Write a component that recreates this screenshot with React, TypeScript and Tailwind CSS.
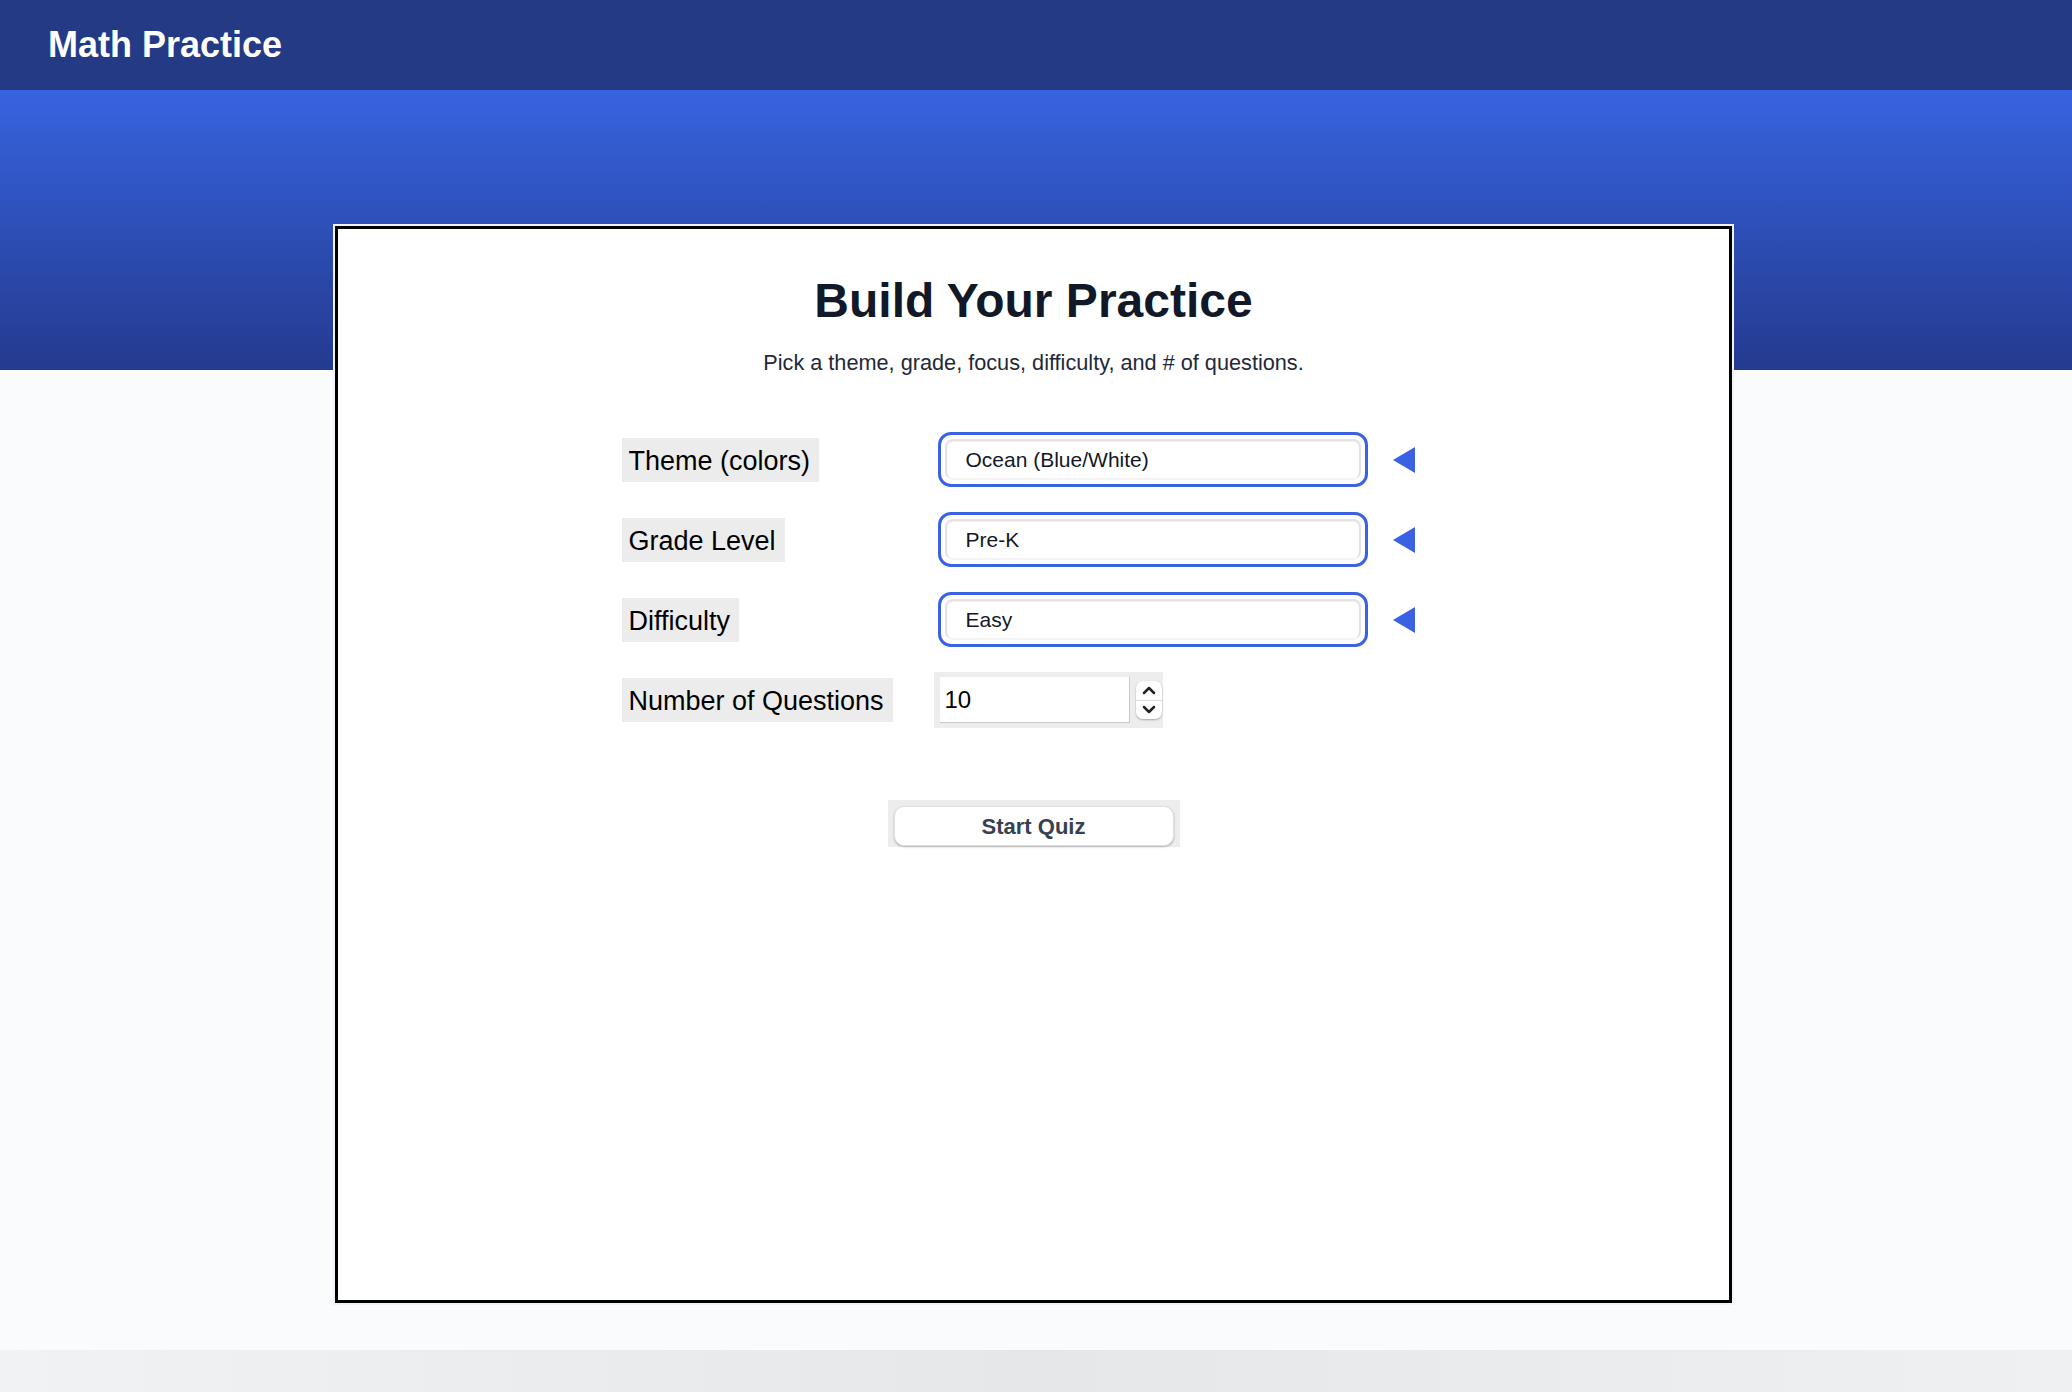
import { useState } from "react";

type SelectProps = {
  value: string;
};

function FakeSelect(props: SelectProps) {
  return (
    <div className="flex items-center">
      <div className="w-[430px] h-[55px] rounded-[13px] border-[3px] border-[#3a62e2] bg-white p-[4px]">
        <div className="h-full rounded-[8px] border-[2px] border-[#e3e3e3] border-b-[#f3f3f3] bg-white pl-[19px] flex items-center text-[21px] text-[#111827] shadow-[inset_0_1px_1px_rgba(0,0,0,0.06)]">
          {props.value}
        </div>
      </div>
      <svg
        className="ml-[25px]"
        width="22"
        height="26"
        viewBox="0 0 22 26"
      >
        <polygon points="22,0 0,13 22,26" fill="#3a62e2" />
      </svg>
    </div>
  );
}

function Label(props: { text: string }) {
  return (
    <div className="w-[316px]">
      <span className="inline-block bg-[#ececec] px-[7px] pl-[7px] pr-[9px] pt-[2px] leading-[42px] text-[27px] text-black">
        {props.text}
      </span>
    </div>
  );
}

function App() {
  const [count] = useState(10);

  return (
    <div
      className="min-h-[1392px] flex flex-col bg-[#fafbfd]"
      style={{ fontFamily: '"Liberation Sans", Arial, sans-serif' }}
    >
      <header className="h-[90px] bg-[#253a85] flex items-center px-[48px]">
        <h1 className="text-[36px] font-bold text-white">Math Practice</h1>
      </header>

      <div className="h-[280px] bg-gradient-to-b from-[#3764e0] to-[#243a8f]" />

      <div className="ml-[335px] mt-[-144px] w-[1397px] h-[1077px] bg-white border-[3px] border-black shadow-[0_0_0_2px_#eef3fc]">
        <div className="pt-[43px] text-center">
          <h2 className="text-[48px] leading-[58px] font-bold text-[#111827]">
            Build Your Practice
          </h2>
          <p className="mt-[18px] text-[21.7px] leading-[30px] text-[#1f2937]">
            Pick a theme, grade, focus, difficulty, and # of questions.
          </p>
        </div>

        <div className="mx-auto mt-[54px] w-[824px] flex flex-col gap-[25px]">
          <div className="flex items-center">
            <Label text="Theme (colors)" />
            <FakeSelect value="Ocean (Blue/White)" />
          </div>
          <div className="flex items-center">
            <Label text="Grade Level" />
            <FakeSelect value="Pre-K" />
          </div>
          <div className="flex items-center">
            <Label text="Difficulty" />
            <FakeSelect value="Easy" />
          </div>
          <div className="flex items-center">
            <Label text="Number of Questions" />
            <div className="ml-[-4px] w-[229px] h-[56px] bg-[#ededed] flex items-center pl-[6px] pr-[1px]">
              <div className="w-[190px] h-[46px] bg-white border-b border-r border-[#c9c9c9] flex items-center pl-[5px] text-[24px] text-black">
                {count}
              </div>
              <div className="ml-[6px] w-[26px] h-[38px] rounded-[7px] bg-white shadow-[0_1px_2px_rgba(0,0,0,0.3)] flex flex-col">
                <div className="flex-1 flex items-center justify-center border-b border-[#dcdcdc]">
                  <svg width="14" height="10" viewBox="0 0 14 10">
                    <polyline
                      points="2,8 7,3 12,8"
                      fill="none"
                      stroke="#222"
                      strokeWidth="2.5"
                      strokeLinecap="round"
                      strokeLinejoin="round"
                    />
                  </svg>
                </div>
                <div className="flex-1 flex items-center justify-center">
                  <svg width="14" height="10" viewBox="0 0 14 10">
                    <polyline
                      points="2,2 7,7 12,2"
                      fill="none"
                      stroke="#222"
                      strokeWidth="2.5"
                      strokeLinecap="round"
                      strokeLinejoin="round"
                    />
                  </svg>
                </div>
              </div>
            </div>
          </div>
        </div>

        <div className="mx-auto mt-[72px] w-[292px] bg-[#ededed] px-[6px] pt-[6px] pb-[1px]">
          <button className="w-full h-[40px] rounded-[10px] bg-white border border-[#e0e0e0] shadow-[0_1px_2px_rgba(0,0,0,0.28)] text-[22px] font-bold text-[#374151]">
            Start Quiz
          </button>
        </div>
      </div>

      <div className="h-[47px]" />
      <footer className="h-[42px] bg-gradient-to-r from-[#f1f2f4] via-[#e6e7e9] to-[#eff0f2]" />
    </div>
  );
}

export default App;
